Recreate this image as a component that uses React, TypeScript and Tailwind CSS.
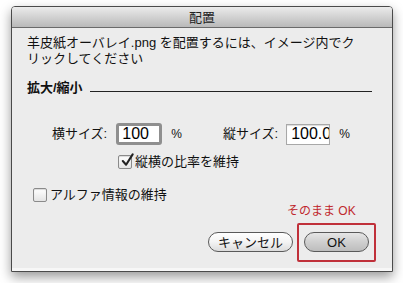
import React from "react";

const jp = "font-['Liberation_Sans','Noto_Sans_CJK_JP',sans-serif]";

function Checkbox({ checked }: { checked?: boolean }) {
  return (
    <span className="relative w-[14px] h-[14px] rounded-[2px] border border-[#8a8a8a] bg-gradient-to-b from-white to-[#e4e4e4] shadow-[inset_0_1px_1px_rgba(0,0,0,0.15)] shrink-0">
      {checked && (
        <svg viewBox="0 0 16 16" className="absolute -top-[3px] left-[1px] w-[15px] h-[15px]">
          <path d="M3 8.5 L6.5 12.5 L13.5 1.5" fill="none" stroke="#222" strokeWidth="2.2" strokeLinecap="round" strokeLinejoin="round" />
        </svg>
      )}
    </span>
  );
}

export default function App() {
  return (
    <div className={`w-[403px] h-[283px] bg-white pt-[6px] pl-[11px] ${jp} text-[13px] text-[#111]`}>
      <div className="w-[382px] h-[266px] flex flex-col border border-[#4a4a4a] rounded-t-[4px] shadow-[0_5px_12px_rgba(0,0,0,0.4)] overflow-hidden">
        {/* title bar */}
        <div className="h-[21px] shrink-0 flex items-center justify-center bg-gradient-to-b from-[#ebebeb] to-[#b9b9b9] border-b border-[#6a6a6a] text-[13px] leading-none text-[#222]">
          配置
        </div>

        {/* body */}
        <div className="flex-1 flex flex-col bg-[#ececec] pl-[15px] border-b-[3px] border-[#f7f7f7]">
          <div className="pt-[7px] leading-[16px] whitespace-nowrap">
            <div>羊皮紙オーバレイ.png を配置するには、イメージ内でク</div>
            <div>リックしてください</div>
          </div>

          <div className="mt-[13px] flex items-end leading-[16px]">
            <span className="font-bold">拡大/縮小</span>
            <span className="ml-[7px] mr-[20px] mb-[4px] flex-1 border-b border-[#222]" />
          </div>

          <div className="mt-[27px] flex items-center h-[22px]">
            <span className="ml-[25px]">横サイズ:</span>
            <div className="ml-[9px] w-[46px] h-[22px] rounded-[3px] border-[3px] border-[#8f8f8f] bg-white flex items-center pl-[3px] text-[16px] leading-none text-black">
              100
            </div>
            <span className="ml-[9px] text-[12px]">%</span>
            <span className="ml-[41px]">縦サイズ:</span>
            <div className="ml-[8px] w-[44px] h-[21px] border border-[#a8a8a8] shadow-[inset_0_1px_1px_rgba(0,0,0,0.15)] bg-white flex items-center pl-[4px] text-[16px] leading-none text-black overflow-hidden whitespace-nowrap">
              100.0
            </div>
            <span className="ml-[9px] text-[12px]">%</span>
          </div>

          <div className="mt-[9px] flex items-center gap-[3px] ml-[91px] leading-[16px]">
            <Checkbox checked />
            <span>縦横の比率を維持</span>
          </div>

          <div className="mt-[17px] flex items-center gap-[3px] ml-[6px] leading-[16px]">
            <Checkbox />
            <span>アルファ情報の維持</span>
          </div>

          <div className="mt-[1px] ml-[260px] text-[12px] leading-[14px] text-[#c0282d] whitespace-nowrap">
            そのまま OK
          </div>

          <div className="mt-[14px] flex justify-end gap-[11px] pr-[23px]">
            <button className="w-[85px] h-[20px] rounded-full border border-[#5a5a5a] bg-gradient-to-b from-white via-[#f4f4f4] to-[#dcdcdc] text-[13px] leading-none text-[#111]">
              キャンセル
            </button>
            <div className="relative">
              <button className="w-[65px] h-[20px] rounded-full border border-[#5a5a5a] bg-gradient-to-b from-[#e6e6e6] via-[#cfcfcf] to-[#bdbdbd] text-[13px] leading-none text-[#111]">
                OK
              </button>
              <span className="absolute -left-[7px] -right-[7px] -top-[9px] -bottom-[10px] border-2 border-[#c0303a] rounded-[2px]" />
            </div>
          </div>
        </div>
      </div>
    </div>
  );
}
